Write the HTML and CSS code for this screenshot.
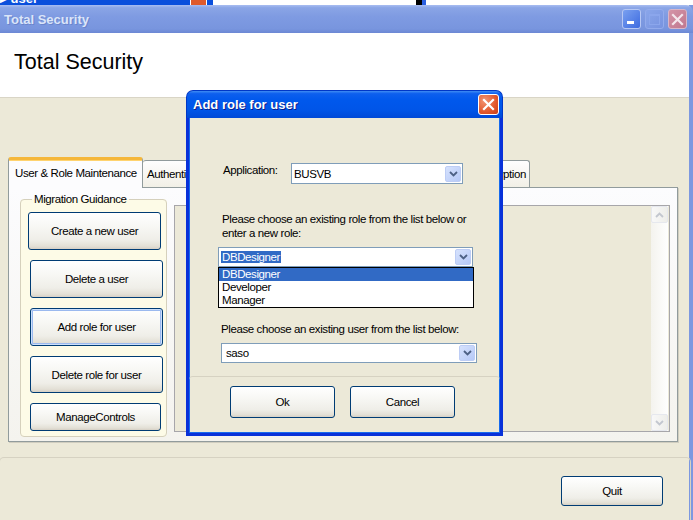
FILE: index.html
```html
<!DOCTYPE html>
<html>
<head>
<meta charset="utf-8">
<title>Total Security</title>
<link rel="stylesheet" href="styles.css">
</head>
<body>
<div class="desk">
  <div class="strip">
    <span class="s-blue1"><span class="s-text">&#9656; user</span></span>
    <span class="s-x"></span>
    <span class="s-blue2"></span>
    <span class="s-white1"></span>
    <span class="s-black"></span>
    <span class="s-blue3"></span>
    <span class="s-white2"></span>
  </div>

  <div class="win">
    <div class="titlebar">
      <span class="title">Total Security</span>
      <div class="tb-btns">
        <span class="tb tb-min"><span class="min-bar"></span></span>
        <span class="tb tb-max"><span class="max-box"></span></span>
        <span class="tb tb-close">
          <svg width="13" height="13" viewBox="0 0 13 13"><path d="M2 2 L11 11 M11 2 L2 11" stroke="#f4e6ec" stroke-width="2.2" stroke-linecap="square"/></svg>
        </span>
      </div>
    </div>

    <div class="header">Total Security</div>

    <div class="main">
      <div class="tabs">
        <div class="tab active">User &amp; Role Maintenance</div>
        <div class="tab t-auth">Authentication</div>
        <div class="tab t-mid">Authorization</div>
        <div class="tab t-mid">Auditing</div>
        <div class="tab t-enc">Encryption</div>
      </div>
      <div class="page">
        <fieldset class="group">
          <legend>Migration Guidance</legend>
          <button class="btn gb gb-create">Create a new user</button>
          <button class="btn gb">Delete a user</button>
          <button class="btn gb focus">Add role for user</button>
          <button class="btn gb gb-short">Delete role for user</button>
          <button class="btn gb gb-manage">ManageControls</button>
        </fieldset>
        <div class="listbox">
          <div class="vscroll">
            <span class="sb-btn">
              <svg width="9" height="6" viewBox="0 0 9 6"><path d="M1 5 L4.5 1.5 L8 5" fill="none" stroke="#c3c7cf" stroke-width="1.8"/></svg>
            </span>
            <span class="sb-track"></span>
            <span class="sb-btn">
              <svg width="9" height="6" viewBox="0 0 9 6"><path d="M1 1 L4.5 4.5 L8 1" fill="none" stroke="#c3c7cf" stroke-width="1.8"/></svg>
            </span>
          </div>
        </div>
      </div>
      <div class="footer">
        <button class="btn quit">Quit</button>
      </div>
    </div>
  </div>

  <div class="dialog">
    <div class="dlg-title">
      <span class="dlg-caption">Add role for user</span>
      <span class="dlg-close">
        <svg width="13" height="13" viewBox="0 0 13 13"><path d="M2 2 L11 11 M11 2 L2 11" stroke="#fff" stroke-width="2.2" stroke-linecap="square"/></svg>
      </span>
    </div>
    <div class="dlg-body">
      <div class="app-row">
        <span class="app-label">Application:</span>
        <div class="combo combo-app">
          <span class="combo-text">BUSVB</span>
          <span class="combo-arrow"><svg width="9" height="6" viewBox="0 0 9 6"><path d="M1 1 L4.5 4.5 L8 1" fill="none" stroke="#4d6185" stroke-width="1.8"/></svg></span>
        </div>
      </div>
      <p class="prompt prompt-role">Please choose an existing role from the list below or enter a new role:</p>
      <div class="combo combo-role">
        <span class="combo-text"><span class="sel">DBDesigner</span></span>
        <span class="combo-arrow"><svg width="9" height="6" viewBox="0 0 9 6"><path d="M1 1 L4.5 4.5 L8 1" fill="none" stroke="#4d6185" stroke-width="1.8"/></svg></span>
        <ul class="droplist">
          <li class="hi">DBDesigner</li>
          <li>Developer</li>
          <li>Manager</li>
        </ul>
      </div>
      <p class="prompt prompt-user">Please choose an existing user from the list below:</p>
      <div class="combo combo-user">
        <span class="combo-text">saso</span>
        <span class="combo-arrow"><svg width="9" height="6" viewBox="0 0 9 6"><path d="M1 1 L4.5 4.5 L8 1" fill="none" stroke="#4d6185" stroke-width="1.8"/></svg></span>
      </div>
      <div class="dlg-foot">
        <button class="btn dbtn">Ok</button>
        <button class="btn dbtn">Cancel</button>
      </div>
    </div>
  </div>
</div>
</body>
</html>
```

FILE: styles.css
```css
* { box-sizing: border-box; }
html, body { margin: 0; padding: 0; }
body {
  width: 693px;
  height: 520px;
  overflow: hidden;
  background: #ece9d8;
  font-family: "Liberation Sans", Arial, sans-serif;
  font-size: 11.5px;
  letter-spacing: -0.4px;
  color: #000;
}
.desk { position: relative; width: 693px; height: 520px; overflow: hidden; }

/* top strip: bits of a window behind */
.strip { display: flex; height: 5px; overflow: hidden; }
.strip span { display: block; height: 5px; }
.s-blue1 { width: 190px; background: #0a4fdc; display: flex !important; align-items: flex-end; overflow: hidden; }
.s-text { color: #fff; font: bold 13px "Liberation Sans", sans-serif; letter-spacing: 0; line-height: 12px; white-space: nowrap; height: auto !important; }
.s-x { width: 17px; background: #de5a2c; border-left: 1px solid #fff; border-right: 1px solid #fff; }
.s-blue2 { width: 6px; background: #0a4fdc; }
.s-white1 { width: 203px; background: #fff; }
.s-black { width: 6px; background: #000; }
.s-blue3 { width: 4px; background: #2a5fe0; }
.s-white2 { flex: 1; background: #fff; }

/* main window */
.win {
  width: 693px;
  height: 515px;
  display: flex;
  flex-direction: column;
  border-right: 4px solid #7c98e0;
}
.titlebar {
  height: 28px;
  flex: none;
  display: flex;
  align-items: center;
  justify-content: space-between;
  padding: 0 6px 0 4px;
  background: linear-gradient(#a9bdf1 0%, #8aa5e6 10%, #7f9be2 40%, #7895de 85%, #6c88d4 100%);
  border-top-right-radius: 7px;
  margin-right: -4px;
}
.title {
  font: bold 13px "Liberation Sans", sans-serif;
  letter-spacing: 0;
  color: #dbe5f9;
  text-shadow: 1px 1px 0 #6a84cc;
}
.tb-btns { display: flex; gap: 4px; }
.tb {
  width: 19px;
  height: 20px;
  border-radius: 3px;
  border: 1px solid #a3b7ee;
  display: flex;
  align-items: center;
  justify-content: center;
  position: relative;
}
.tb-min { background: linear-gradient(135deg, #7aa0f0, #3d6be0); border-color: #b7c8f4; }
.min-bar { position: absolute; left: 4px; bottom: 4px; width: 7px; height: 3px; background: #fff; }
.tb-max { background: linear-gradient(135deg, #8aa6ea, #7793e0); border-color: #93abec; }
.max-box { width: 11px; height: 11px; border: 1px solid #8ba6ec; border-top-width: 2px; }
.tb-close { background: linear-gradient(135deg, #d493a6, #c0788f); border-color: #d8b6c8; }

.header {
  height: 64px;
  flex: none;
  background: #fff;
  font-family: "Liberation Sans", sans-serif;
  font-size: 21.5px;
  letter-spacing: 0;
  line-height: 24px;
  padding: 17px 14px 0;
}

.main {
  flex: 1;
  background: #ece9d8;
  border-top: 1px solid #d9d5c6;
  padding-top: 59px;
  display: flex;
  flex-direction: column;
}

/* tabs */
.tabs {
  display: flex;
  align-items: flex-end;
  height: 30px;
  padding-left: 8px;
  position: relative;
  z-index: 2;
}
.tab {
  height: 27px;
  border: 1px solid #919b9c;
  border-bottom: none;
  border-radius: 3px 3px 0 0;
  background: linear-gradient(#fefefe, #f1efe6);
  padding: 0 4px;
  line-height: 26px;
  white-space: nowrap;
  overflow: hidden;
}
.tab.active {
  height: 31px;
  margin-bottom: -1px;
  width: 135px;
  padding: 0 6px;
  background: #fcfcfe;
  border-top: 3px solid #f5b73a;
  box-shadow: inset 0 1px 0 #ffd36f;
  line-height: 26px;
}
.t-auth { width: 110px; border-left: none; }
.t-mid { width: 100px; border-left: none; }
.t-enc { width: 77px; text-align: right; padding-right: 3px; border-left: none; }

.page {
  margin-left: 8px;
  width: 670px;
  height: 255px;
  border: 1px solid #919b9c;
  background: linear-gradient(#fcfcfe, #f4f3ee);
  box-shadow: 1px 1px 0 #d0cdbf;
  display: flex;
  align-items: flex-start;
  padding: 4px 6px 0 11px;
  gap: 7px;
  position: relative;
  z-index: 1;
}

.group {
  margin: 0;
  width: 147px;
  height: 245px;
  border: 1px solid #d5d0bc;
  border-radius: 4px;
  background: #fdfbe7;
  padding: 0 0 0 7px;
  display: flex;
  flex-direction: column;
  align-items: flex-start;
}
.group legend {
  padding: 0 2px;
  margin-left: 4px;
  line-height: 14px;
  color: #000;
}

.btn {
  font-family: "Liberation Sans", Arial, sans-serif;
  font-size: 11.5px;
  letter-spacing: -0.4px;
  color: #000;
  border: 1px solid #003c74;
  border-radius: 3px;
  background: linear-gradient(#ffffff 0%, #f8f8f5 35%, #efeee8 75%, #e3e0d6 92%, #d6d0c5 100%);
  padding: 0;
}
.gb { width: 133px; height: 38px; margin-left: 2px; margin-top: 10px; }
.gb-create { margin-left: 0; margin-top: 6px; }
.gb-short { height: 37px; }
.gb.gb-manage { height: 28px; width: 131px; }
.btn.focus { box-shadow: inset 0 0 0 1px #cde0fb, inset 0 0 0 2px #9bb9ef; }

.listbox {
  margin-top: 13px;
  width: 496px;
  height: 227px;
  border: 1px solid #a7a6aa;
  background: #ece9d8;
  display: flex;
  justify-content: flex-end;
  padding: 0 1px 0 0;
}
.vscroll {
  width: 17px;
  height: 100%;
  display: flex;
  flex-direction: column;
  background: linear-gradient(to right, #f4f3ee, #fefefe);
}
.sb-btn {
  height: 17px;
  flex: none;
  border: 1px solid #e6e8ee;
  border-radius: 2px;
  background: linear-gradient(to right, #f8f8f8, #eeeeea);
  display: flex;
  align-items: center;
  justify-content: center;
}
.sb-track { flex: 1; }

.footer {
  margin-top: 15px;
  flex: 1;
  margin-left: -1px;
  margin-right: -2px;
  border: 1px solid #d6d2c2;
  border-bottom: none;
  border-radius: 5px 5px 0 0;
  display: flex;
  justify-content: flex-end;
  padding: 18px 27px 0 0;
  align-items: flex-start;
}
.quit { width: 102px; height: 30px; }

/* dialog */
.dialog {
  position: absolute;
  left: 186px;
  top: 90px;
  width: 317px;
  height: 346px;
  display: flex;
  flex-direction: column;
  z-index: 10;
}
.dlg-title {
  height: 28px;
  flex: none;
  border-radius: 7px 7px 0 0;
  background: linear-gradient(#3f8cf3 0%, #0d5fee 10%, #0058ec 35%, #0055e8 70%, #0049d7 100%);
  border: 1px solid #0037c6;
  border-bottom: none;
  display: flex;
  align-items: center;
  justify-content: space-between;
  padding: 0 3px 0 6px;
}
.dlg-caption {
  font: bold 13px "Liberation Sans", sans-serif;
  letter-spacing: 0;
  color: #fff;
  text-shadow: 1px 1px 0 #0a1e8c;
}
.dlg-close {
  width: 21px;
  height: 21px;
  border: 1px solid #fff;
  border-radius: 3px;
  background: radial-gradient(circle at 30% 30%, #f29573, #e2582c 60%, #c93e17);
  display: flex;
  align-items: center;
  justify-content: center;
}
.dlg-body {
  flex: 1;
  background: #ece9d8;
  border: 3px solid #0831d9;
  border-top: none;
  box-shadow: inset 1px 0 0 #166aee, inset -1px 0 0 #166aee, inset 0 -1px 0 #166aee;
  display: flex;
  flex-direction: column;
  padding-top: 45px;
}
.app-row { display: flex; align-items: flex-start; padding-left: 34px; height: 21px; }
.app-label { width: 68px; line-height: 14px; }
.combo {
  position: relative;
  height: 20px;
  border: 1px solid #7f9db9;
  background: #fff;
  display: flex;
  align-items: center;
  justify-content: space-between;
}
.combo-app { width: 172px; height: 21px; }
.combo-text { padding-left: 2px; line-height: 16px; }
.combo-arrow {
  width: 16px;
  height: 16px;
  margin-right: 1px;
  border: 1px solid #bdcdf5;
  border-radius: 2px;
  background: linear-gradient(135deg, #d6e2fd, #b6c9f7);
  display: flex;
  align-items: center;
  justify-content: center;
}
.prompt { margin: 0; line-height: 14px; }
.prompt-role { margin: 28px 0 0 33px; width: 255px; }
.combo-role { margin: 7px 0 0 29px; width: 255px; }
.sel { background: #316ac5; color: #fff; padding: 0 1px; }
.droplist {
  position: absolute;
  left: -1px;
  top: 19px;
  width: 256px;
  margin: 0;
  padding: 0;
  list-style: none;
  border: 1px solid #000;
  background: #fff;
}
.droplist li { height: 13px; line-height: 13px; padding-left: 3px; }
.droplist li.hi { background: #316ac5; color: #fff; }
.prompt-user { margin: 55px 0 0 32px; }
.combo-user { margin: 7px 0 0 32px; width: 256px; }
.combo-user .combo-text { padding-left: 4px; }

.dlg-foot {
  margin-top: 13px;
  flex: 1;
  border-top: 1px solid #d6d2c2;
  border-radius: 4px 4px 0 0;
  display: flex;
  gap: 15px;
  padding: 9px 0 0 41px;
  align-items: flex-start;
}
.dbtn { width: 105px; height: 32px; }
```
